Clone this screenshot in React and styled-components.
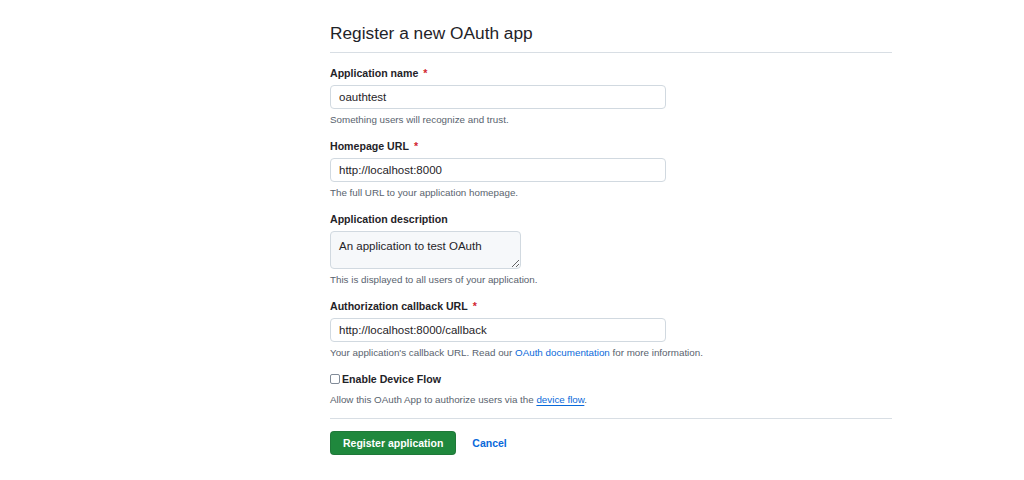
import styled, { createGlobalStyle } from "styled-components";

const GlobalStyle = createGlobalStyle`
  html, body {
    margin: 0;
    padding: 0;
    background: #ffffff;
  }
  body {
    font-family: "Liberation Sans", Arial, sans-serif;
    color: #1f2328;
    -webkit-font-smoothing: antialiased;
  }
`;

const Page = styled.div`
  width: 1024px;
  height: 480px;
  box-sizing: border-box;
  padding: 21px 0 0 330px;
`;

const Main = styled.main`
  width: 562px;
`;

const Header = styled.h2`
  margin: 0;
  font-size: 17.3px;
  font-weight: 400;
  line-height: 24px;
  padding-bottom: 7px;
  border-bottom: 1px solid #d8dee4;
  color: #1f2328;
`;

const Form = styled.form`
  display: flex;
  flex-direction: column;
  padding-top: 12px;
`;

const Group = styled.div`
  display: flex;
  flex-direction: column;
  align-items: flex-start;
  margin-bottom: 11px;
`;

const Label = styled.label`
  font-size: 10.6px;
  font-weight: 700;
  line-height: 16px;
  margin-bottom: 4px;
  color: #1f2328;
`;

const Required = styled.span`
  color: #d1242f;
  margin-left: 5px;
`;

const TextInput = styled.input`
  box-sizing: border-box;
  width: 336px;
  height: 24px;
  padding: 0 8px;
  border: 1px solid #d1d9e0;
  border-radius: 4px;
  background: #ffffff;
  font-family: inherit;
  font-size: 11.5px;
  color: #1f2328;
  outline: none;
`;

const TextArea = styled.textarea`
  box-sizing: border-box;
  width: 191px;
  height: 38px;
  padding: 6px 8px;
  border: 1px solid #d1d9e0;
  border-radius: 4px;
  background: #f6f8fa;
  font-family: inherit;
  font-size: 11.5px;
  line-height: 16px;
  color: #1f2328;
  outline: none;
  resize: both;
`;

const Note = styled.p`
  margin: ${(p) => (p.$tight ? "6px" : "4px")} 0 0;
  font-size: 9.8px;
  line-height: 14px;
  color: #59636e;
`;

const Link = styled.a`
  color: #0969da;
  text-decoration: ${(p) => (p.$underline ? "underline" : "none")};
  text-underline-offset: 2px;
`;

const CheckRow = styled.label`
  display: flex;
  align-items: center;
  font-size: 10.6px;
  font-weight: 700;
  line-height: 16px;
  color: #1f2328;
`;

const Checkbox = styled.input`
  appearance: none;
  box-sizing: border-box;
  width: 10px;
  height: 10px;
  margin: 0 2px 0 0;
  border: 1px solid #818b98;
  border-radius: 2px;
  background: #ffffff;
`;

const Divider = styled.hr`
  width: 100%;
  margin: 11px 0 12px;
  border: 0;
  border-top: 1px solid #d8dee4;
`;

const Actions = styled.div`
  display: flex;
  align-items: center;
  gap: 16px;
`;

const PrimaryButton = styled.button`
  box-sizing: border-box;
  height: 24px;
  padding: 0 12px;
  border: 1px solid rgba(31, 35, 40, 0.15);
  border-radius: 4px;
  background: #1f883d;
  color: #ffffff;
  font-family: inherit;
  font-size: 10.5px;
  font-weight: 700;
  cursor: pointer;
`;

const TextButton = styled.button`
  padding: 0;
  border: 0;
  background: none;
  color: #0969da;
  font-family: inherit;
  font-size: 10.5px;
  font-weight: 700;
  cursor: pointer;
`;

const fields = [
  {
    id: "name",
    label: "Application name",
    value: "oauthtest",
    note: "Something users will recognize and trust.",
    required: true,
  },
  {
    id: "homepage",
    label: "Homepage URL",
    value: "http://localhost:8000",
    note: "The full URL to your application homepage.",
    required: true,
  },
];

export default function App() {
  return (
    <>
      <GlobalStyle />
      <Page>
        <Main>
          <Header>Register a new OAuth app</Header>
          <Form onSubmit={(e) => e.preventDefault()}>
            {fields.map((f) => (
              <Group key={f.id}>
                <Label htmlFor={f.id}>
                  {f.label}
                  {f.required && <Required>*</Required>}
                </Label>
                <TextInput id={f.id} defaultValue={f.value} />
                <Note>{f.note}</Note>
              </Group>
            ))}

            <Group>
              <Label htmlFor="description">Application description</Label>
              <TextArea id="description" defaultValue="An application to test OAuth" />
              <Note>This is displayed to all users of your application.</Note>
            </Group>

            <Group>
              <Label htmlFor="callback">
                Authorization callback URL<Required>*</Required>
              </Label>
              <TextInput id="callback" defaultValue="http://localhost:8000/callback" />
              <Note>
                Your application's callback URL. Read our{" "}
                <Link href="#">OAuth documentation</Link> for more information.
              </Note>
            </Group>

            <div>
              <CheckRow>
                <Checkbox type="checkbox" />
                Enable Device Flow
              </CheckRow>
              <Note $tight>
                Allow this OAuth App to authorize users via the{" "}
                <Link href="#" $underline>device flow</Link>.
              </Note>
            </div>

            <Divider />

            <Actions>
              <PrimaryButton type="submit">Register application</PrimaryButton>
              <TextButton type="button">Cancel</TextButton>
            </Actions>
          </Form>
        </Main>
      </Page>
    </>
  );
}
